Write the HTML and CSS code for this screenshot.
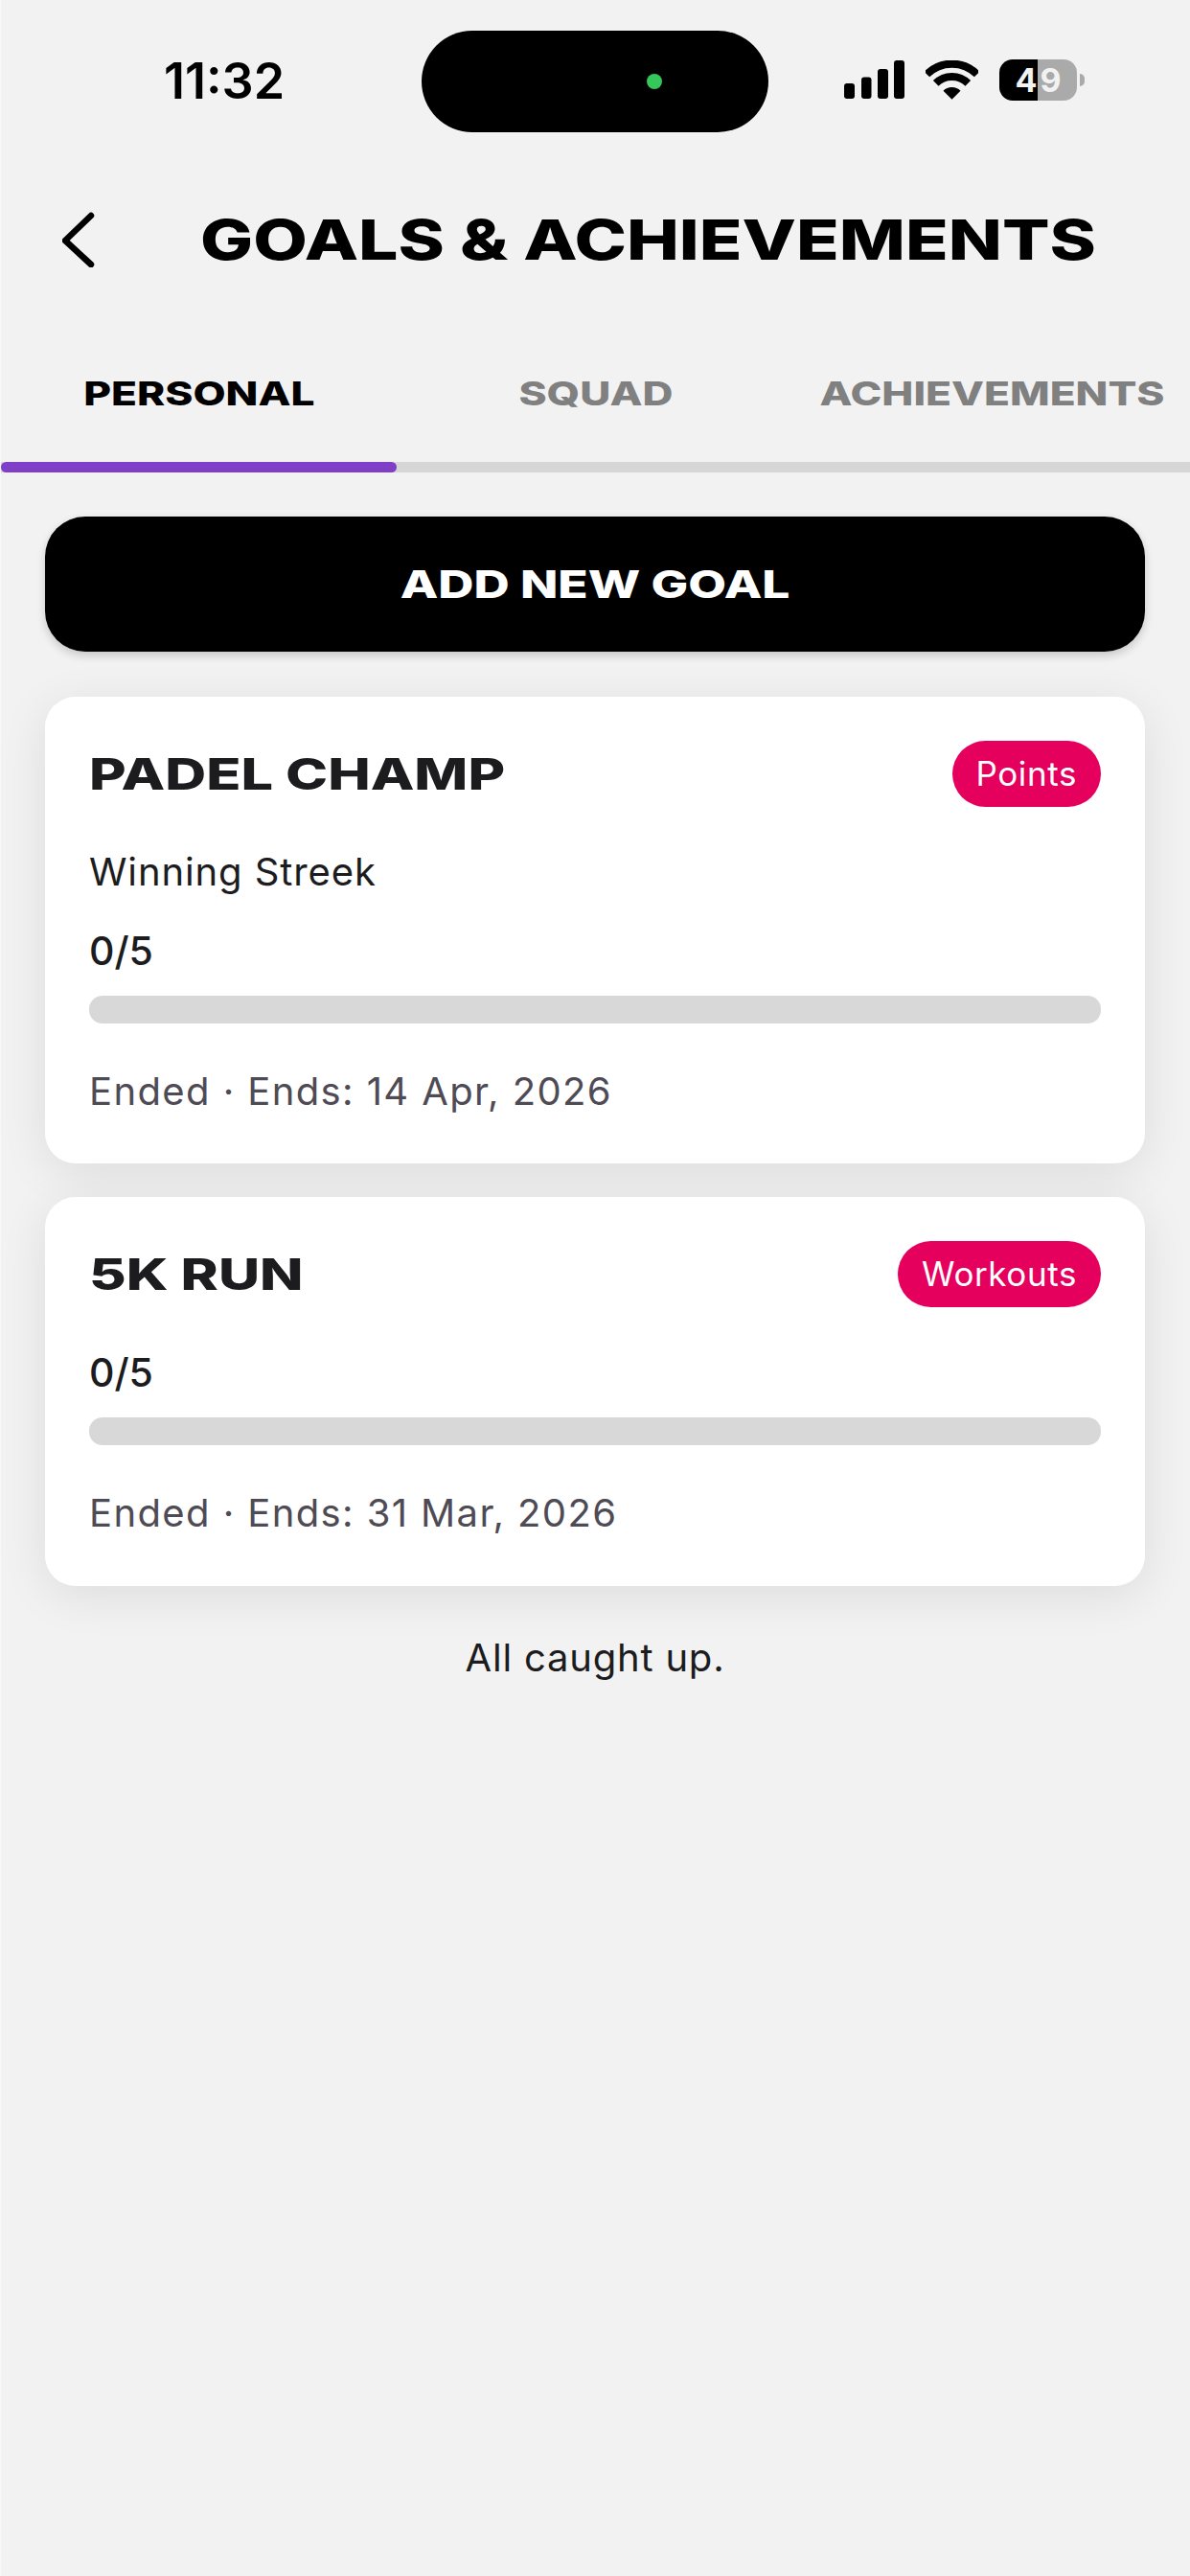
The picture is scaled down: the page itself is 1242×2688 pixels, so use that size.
FILE: index.html
```html
<!DOCTYPE html>
<html lang="en">
<head>
<meta charset="utf-8">
<title>Goals &amp; Achievements</title>
<link rel="stylesheet" href="styles.css">
</head>
<body>
<div class="app">
  <div class="status">
    <div class="time">11:32</div>
    <div class="island"><span class="dot"></span></div>
    <svg class="signal" width="63" height="40" viewBox="0 0 63 40">
      <rect x="0" y="24" width="11" height="16" rx="3"/>
      <rect x="18" y="17.5" width="10.5" height="22.5" rx="3"/>
      <rect x="35" y="9" width="11" height="31" rx="3"/>
      <rect x="52" y="0" width="11" height="40" rx="3"/>
    </svg>
    <svg class="wifi" width="55" height="41" viewBox="0 0 55 41">
      <path d="M1.3 14.5A37 37 0 0 1 53.7 14.5" fill="none" stroke="#000" stroke-width="8"/>
      <path d="M10.7 23.9A23.7 23.7 0 0 1 44.3 23.9" fill="none" stroke="#000" stroke-width="8"/>
      <path d="M27.5 40.7L18.5 31.7A12.7 12.7 0 0 1 36.5 31.7Z"/>
    </svg>
    <div class="battery">49</div>
  </div>

  <div class="header">
    <svg class="back" width="34" height="58" viewBox="0 0 34 58">
      <path d="M30 4L3 30L30 55" fill="none" stroke="#000" stroke-width="6.5" stroke-linecap="round" stroke-linejoin="round"/>
    </svg>
    <div class="title-wrap"><h1 class="title">GOALS &amp; ACHIEVEMENTS</h1></div>
  </div>

  <div class="tabs">
    <div class="tab"><span class="tab-label active">PERSONAL</span></div>
    <div class="tab"><span class="tab-label">SQUAD</span></div>
    <div class="tab"><span class="tab-label">ACHIEVEMENTS</span></div>
  </div>
  <div class="track"><div class="indicator"></div></div>

  <main class="content">
    <button class="add"><span class="add-label">ADD NEW GOAL</span></button>

    <section class="card first">
      <div class="card-head">
        <h2 class="card-title">PADEL CHAMP</h2>
        <span class="pill">Points</span>
      </div>
      <p class="sub">Winning Streek</p>
      <p class="count after-sub">0/5</p>
      <div class="bar"></div>
      <p class="meta">Ended · Ends: 14 Apr, 2026</p>
    </section>

    <section class="card">
      <div class="card-head">
        <h2 class="card-title">5K RUN</h2>
        <span class="pill">Workouts</span>
      </div>
      <p class="count">0/5</p>
      <div class="bar"></div>
      <p class="meta">Ended · Ends: 31 Mar, 2026</p>
    </section>

    <p class="caught">All caught up.</p>
  </main>
</div>
</body>
</html>
```

FILE: styles.css
```css
* { box-sizing: border-box; }
html, body { margin: 0; padding: 0; }
body { background: #f8f8f8; width: 1242px; height: 2688px; overflow: hidden; }
.app {
  margin-left: 1px;
  height: 2688px;
  background: #f2f2f2;
  font-family: Inter, "Liberation Sans", sans-serif;
  color: #1c1c1e;
}

/* status bar */
.status { display: flex; align-items: center; height: 138px; padding: 32px 0 0 170px; }
.time { width: 269px; font-size: 52px; font-weight: 600; color: #000; line-height: 106px; }
.island { position: relative; width: 362px; height: 106px; border-radius: 53px; background: #000; flex: none; }
.dot { position: absolute; left: 235px; top: 45px; width: 16px; height: 16px; border-radius: 50%; background: #34c759; }
.signal { margin-left: 79px; margin-top: -4px; flex: none; }
.wifi { margin-left: 22px; margin-top: -4px; flex: none; }
.battery {
  position: relative;
  margin-left: 22px;
  margin-top: -4px;
  width: 81px;
  height: 43px;
  padding-left: 3px;
  border-radius: 14px;
  background: linear-gradient(90deg, #000 50%, #aaa 50%);
  color: #f2f2f2;
  font-size: 34px;
  font-weight: 700;
  line-height: 43px;
  letter-spacing: 3px;
  text-align: center;
  flex: none;
}
.battery::after {
  content: "";
  position: absolute;
  left: 84px;
  top: 15px;
  width: 5px;
  height: 13px;
  border-radius: 0 5px 5px 0;
  background: #aaa;
}

/* header */
.header { display: flex; align-items: center; height: 224px; padding: 0 0 0 64px; }
.back { flex: none; }
.title-wrap { flex: 1; text-align: center; padding-left: 12px; }
.title {
  display: inline-block;
  margin: 0;
  font-size: 58px;
  font-weight: 800;
  line-height: 70px;
  color: #000;
  white-space: nowrap;
  transform: scaleX(1.265);
}

/* tabs */
.tabs { display: flex; height: 120px; padding-bottom: 23px; align-items: center; }
.tab { flex: 1; text-align: center; }
.tab-label {
  display: inline-block;
  font-size: 34px;
  font-weight: 800;
  line-height: 40px;
  color: #808080;
  white-space: nowrap;
  transform: scaleX(1.3);
}
.tab-label.active { color: #000; }
.track { height: 11px; background: #d6d6d6; }
.indicator { width: 33.3%; height: 11px; border-radius: 6px; background: #7f3fc6; }

/* content */
.content { padding: 46px 47px 0 46px; isolation: isolate; }
.add {
  display: block;
  width: 100%;
  height: 141px;
  padding: 0;
  border: 0;
  border-radius: 42px;
  background: #000;
  box-shadow: 0 4px 10px rgba(0, 0, 0, 0.18);
  text-align: center;
  font-family: inherit;
}
.add-label {
  display: inline-block;
  font-size: 40px;
  font-weight: 800;
  line-height: 48px;
  color: #fff;
  white-space: nowrap;
  transform: scaleX(1.287);
}

.card {
  position: relative;
  margin-top: 35px;
  padding: 46px 46px 48px;
  border-radius: 32px;
  background: #fff;
}
.card.first { margin-top: 47px; padding-bottom: 47px; }
.card::before {
  content: "";
  position: absolute;
  inset: 0;
  z-index: -1;
  border-radius: inherit;
  box-shadow: 0 10px 50px rgba(0, 0, 0, 0.09);
}
.card-head { display: flex; justify-content: space-between; align-items: center; height: 69px; }
.card-title {
  margin: 0;
  font-size: 45px;
  font-weight: 800;
  line-height: 56px;
  white-space: nowrap;
  transform: scaleX(1.32);
  transform-origin: left center;
}
.pill {
  display: block;
  height: 69px;
  padding: 0 25px;
  border-radius: 35px;
  background: #e5005d;
  color: #fff;
  font-size: 35px;
  line-height: 69px;
  letter-spacing: 0.6px;
}
.sub, .count, .meta { margin: 0; line-height: 56px; }
.sub { margin-top: 40px; font-size: 40px; letter-spacing: 0.9px; }
.count { margin-top: 40px; font-size: 41px; font-weight: 500; }
.count.after-sub { margin-top: 26px; }
.bar { margin-top: 19px; height: 29px; border-radius: 14px; background: #d8d8d8; }
.meta { margin-top: 43px; font-size: 40px; letter-spacing: 1.4px; color: #4f4b55; }
.caught { margin: 47px 0 0; text-align: center; font-size: 40px; line-height: 56px; letter-spacing: 0.8px; }
```
